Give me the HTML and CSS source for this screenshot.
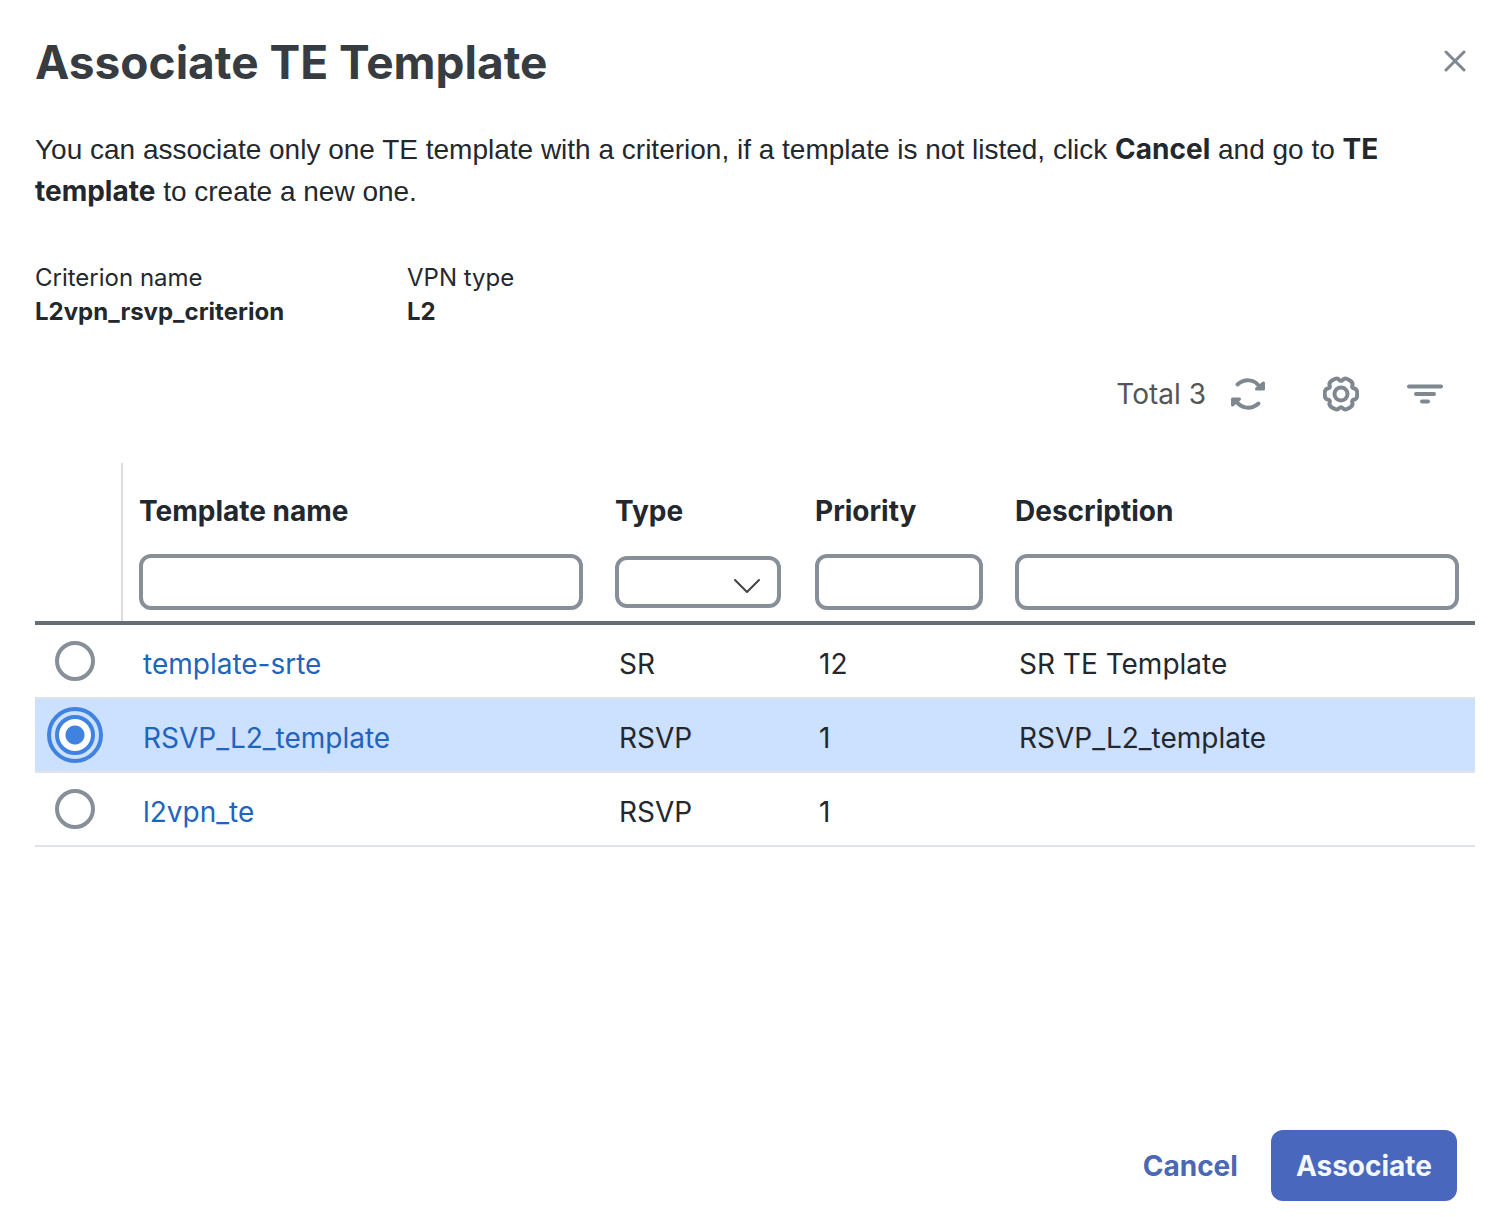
FILE: index.html
```html
<!DOCTYPE html>
<html lang="en">
<head>
<meta charset="utf-8">
<meta name="viewport" content="width=device-width, initial-scale=1">
<title>Associate TE Template</title>
<link rel="stylesheet" href="styles.css">
</head>
<body>
<main class="dialog" role="dialog" aria-labelledby="dialog-title">
  <header class="dialog-header">
    <h1 class="dialog-title" id="dialog-title">Associate TE Template</h1>
    <button class="icon-button" type="button" aria-label="Close">
      <svg width="24" height="24" viewBox="0 0 24 24" fill="none" stroke="currentColor" stroke-width="3" stroke-linecap="round"><path d="M3 2 21 20M21 2 3 20"/></svg>
    </button>
  </header>

  <p class="intro">You can associate only one TE template with a criterion, if a template is not listed, click <strong>Cancel</strong> and go to <strong>TE template</strong> to create a new one.</p>

  <dl class="facts">
    <div class="fact"><dt>Criterion name</dt><dd>L2vpn_rsvp_criterion</dd></div>
    <div class="fact"><dt>VPN type</dt><dd>L2</dd></div>
  </dl>

  <div class="toolbar">
    <div class="total">
      <span>Total 3</span>
      <button class="icon-button" type="button" aria-label="Refresh">
        <svg width="36" height="36" viewBox="-18 -18 36 36" fill="none" stroke="currentColor" stroke-width="4" stroke-linecap="round" stroke-linejoin="round">
          <path d="M-10.500-9.500C-4-15.500 7-15.500 12-6.500"/>
          <path d="M15.500-11V-5H8.500Z" stroke-width="3" fill="currentColor"/>
          <path d="M10.500 9.500C4 15.500-7 15.500-12 6.500"/>
          <path d="M-15.500 11V5H-8.500Z" stroke-width="3" fill="currentColor"/>
        </svg>
      </button>
    </div>
    <div class="tools">
      <button class="icon-button" type="button" aria-label="Settings">
        <svg width="36" height="36" viewBox="-18 -18 36 36" fill="none" stroke="currentColor" stroke-width="4">
          <path d="M13.300-5.500Q16.300-5 16.300 0Q16.300 5 13.300 5.500Q10.400 6 11.400 8.800Q12.400 11.600 8.100 14.100Q3.800 16.600 1.900 14.300Q0 12-1.900 14.300Q-3.800 16.600-8.100 14.100Q-12.400 11.600-11.400 8.800Q-10.400 6-13.300 5.500Q-16.300 5-16.300 0Q-16.300-5-13.300-5.500Q-10.400-6-11.400-8.800Q-12.400-11.600-8.100-14.100Q-3.800-16.600-1.900-14.300Q0-12 1.900-14.300Q3.800-16.600 8.100-14.100Q12.400-11.600 11.400-8.800Q10.400-6 13.300-5.500Z"/>
          <circle r="6.500"/>
        </svg>
      </button>
      <button class="icon-button" type="button" aria-label="Filter">
        <svg width="36" height="36" viewBox="0 0 36 36" fill="none" stroke="currentColor" stroke-width="4" stroke-linecap="round"><path d="M2 10.500H34M9 18H27M15 25.500H21"/></svg>
      </button>
    </div>
  </div>

  <table class="templates">
    <colgroup>
      <col class="col-select"><col><col class="col-short"><col class="col-short"><col>
    </colgroup>
    <thead>
      <tr>
        <td class="divider"></td>
        <th scope="col"><label for="filter-name">Template name</label><span class="field"><input class="control" id="filter-name" type="text"></span></th>
        <th scope="col"><label for="filter-type">Type</label><span class="field"><select class="control select" id="filter-type"><option></option><option>SR</option><option>RSVP</option></select><svg class="chevron" width="28" height="16" viewBox="0 0 28 16" fill="none" stroke="currentColor" stroke-width="2" stroke-linecap="round" stroke-linejoin="round" aria-hidden="true"><path d="M2 2 14 14 26 2"/></svg></span></th>
        <th scope="col"><label for="filter-priority">Priority</label><span class="field"><input class="control" id="filter-priority" type="text"></span></th>
        <th scope="col"><label for="filter-description">Description</label><span class="field"><input class="control" id="filter-description" type="text"></span></th>
      </tr>
    </thead>
    <tbody>
      <tr>
        <td class="pick"><input class="radio" type="radio" name="template" aria-label="Select template-srte"></td>
        <td><a href="#template-srte">template-srte</a></td><td>SR</td><td>12</td><td>SR TE Template</td>
      </tr>
      <tr class="selected">
        <td class="pick"><input class="radio" type="radio" name="template" aria-label="Select RSVP_L2_template" checked></td>
        <td><a href="#rsvp-l2-template">RSVP_L2_template</a></td><td>RSVP</td><td>1</td><td>RSVP_L2_template</td>
      </tr>
      <tr>
        <td class="pick"><input class="radio" type="radio" name="template" aria-label="Select l2vpn_te"></td>
        <td><a href="#l2vpn-te">l2vpn_te</a></td><td>RSVP</td><td>1</td><td></td>
      </tr>
    </tbody>
  </table>

  <footer class="actions">
    <button class="button" type="button">Cancel</button>
    <button class="button button-primary" type="button">Associate</button>
  </footer>
</main>
</body>
</html>
```
FILE: styles.css
```css
* {
  box-sizing: border-box;
}

body {
  margin: 0;
  background: #fff;
  color: #23282e;
  font-family: Inter, "Liberation Sans", sans-serif;
  font-size: 28px;
}

.dialog {
  display: flex;
  flex-direction: column;
  min-height: 100vh;
  padding: 32px 27px 16px 35px;
}

.dialog-header {
  display: flex;
  align-items: center;
  justify-content: space-between;
  padding-right: 8px;
}

.dialog-title {
  margin: 0;
  color: #373c42;
  font-size: 46px;
  line-height: 60px;
  font-weight: 700;
}

.icon-button {
  display: flex;
  padding: 0;
  border: 0;
  background: none;
  color: #7f8790;
}

.intro {
  margin: 37px 72px 0 0;
  font-family: "Liberation Sans", Arial, sans-serif;
  line-height: 42px;
}

.intro strong {
  font-family: Inter, sans-serif;
  line-height: 28px;
  font-weight: 700;
}

.facts {
  display: flex;
  margin: 48px 0 0;
  font-size: 24px;
  line-height: 34px;
}

.fact {
  width: 372px;
}

.fact dd {
  margin: 0;
  font-weight: 700;
}

.toolbar {
  display: flex;
  justify-content: flex-end;
  gap: 57px;
  margin-top: 47px;
  padding-right: 32px;
  color: #555;
  line-height: 34px;
}

.total,
.tools {
  display: flex;
  align-items: center;
}

.total {
  gap: 24px;
}

.tools {
  gap: 48px;
}

.templates {
  width: 100%;
  margin-top: 51px;
  border-collapse: separate;
  border-spacing: 0;
  table-layout: fixed;
}

.col-select {
  width: 88px;
}

.col-short {
  width: 200px;
}

.templates thead td,
.templates th {
  height: 162px;
  padding: 0 16px 7px;
  border-bottom: 4px solid #666d74;
  text-align: left;
  vertical-align: bottom;
}

.templates .divider {
  background: linear-gradient(#dcdcdc, #dcdcdc) right / 2px 100% no-repeat;
}

.templates th label {
  display: block;
  line-height: 34px;
  font-weight: 700;
}

.field {
  position: relative;
  display: flex;
  align-items: center;
  height: 64px;
  margin-top: 22px;
}

.control {
  width: 100%;
  height: 56px;
  padding: 0 12px;
  border: 4px solid #878f98;
  border-radius: 12px;
  background: #fff;
  color: inherit;
  font: inherit;
  font-weight: 400;
}

.select {
  width: calc(100% - 2px);
  height: 52px;
  appearance: none;
}

.chevron {
  position: absolute;
  right: 22px;
  top: 28px;
  color: #444;
  pointer-events: none;
}

.templates tbody td {
  height: 74px;
  padding: 6px 20px 0;
  border-bottom: 2px solid #dfe2e6;
  line-height: 34px;
}

.templates tbody .pick {
  padding: 0 20px;
}

.selected {
  background: #cce0ff;
}

.templates a {
  color: #2064bd;
  text-decoration: none;
}

.radio {
  display: block;
  width: 40px;
  height: 40px;
  margin: 0;
  border: 4px solid #878f98;
  border-radius: 50%;
  background: #fff;
  appearance: none;
}

.radio:checked {
  border-color: #3f82e0;
  outline: 4px solid #3f82e0;
  outline-offset: 4px;
  background: radial-gradient(circle, #3f82e0 9px, #fff 10px);
}

.actions {
  display: flex;
  align-items: center;
  justify-content: flex-end;
  gap: 8px;
  margin-top: auto;
  padding: 32px 18px 0 0;
}

.button {
  height: 71px;
  padding: 0 25px;
  border: 0;
  border-radius: 12px;
  background: none;
  color: #4a69b4;
  font: inherit;
  font-weight: 700;
}

.button-primary {
  background: #4867bd;
  color: #f3f7ff;
}
```
